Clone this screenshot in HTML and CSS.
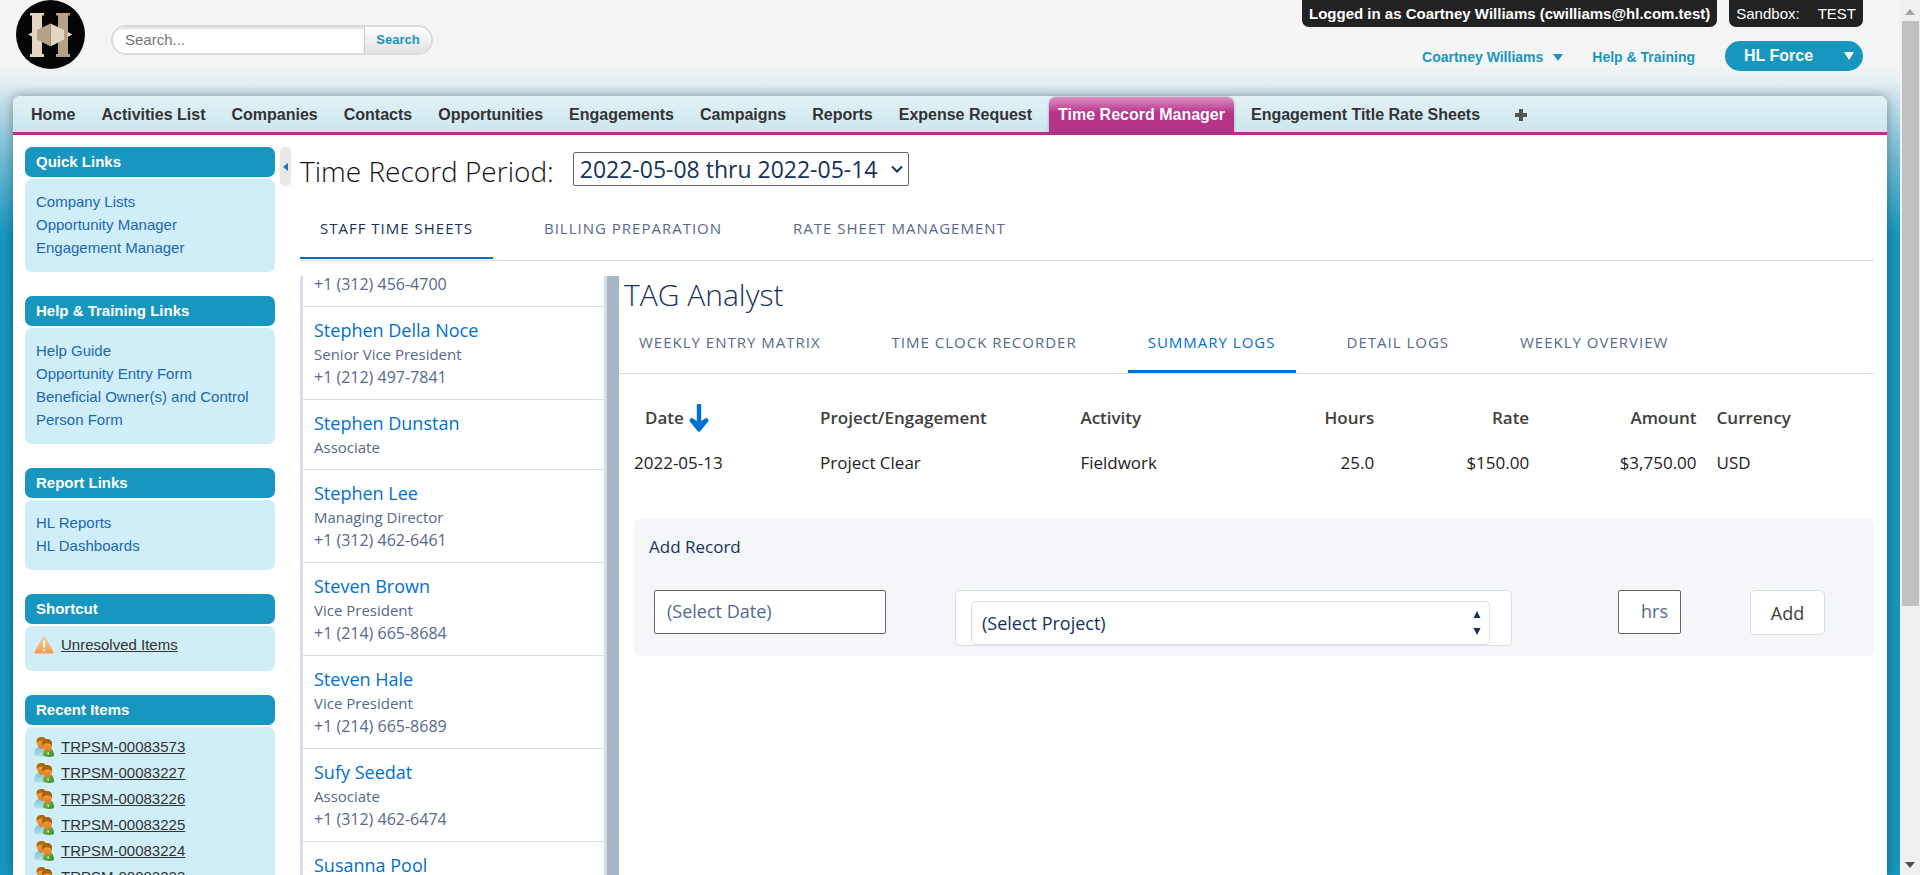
FILE: index.html
```html
<!DOCTYPE html>
<html lang="en">
<head>
<meta charset="utf-8">
<title>Time Record Manager</title>
<link rel="stylesheet" href="styles.css">
</head>
<body>
<svg class="defs" width="0" height="0" aria-hidden="true">
  <defs>
    <linearGradient id="warn" x1="0" y1="0" x2="0" y2="1"><stop offset="0" stop-color="#f8c9a0"/><stop offset="1" stop-color="#f39a4c"/></linearGradient>
    <linearGradient id="face" x1="0" y1="0" x2="0" y2="1"><stop offset="0" stop-color="#f6a53c"/><stop offset="1" stop-color="#e07c28"/></linearGradient>
    <linearGradient id="green" x1="0" y1="0" x2="1" y2="1"><stop offset="0" stop-color="#7dbd45"/><stop offset="1" stop-color="#3c8a2e"/></linearGradient>
    <linearGradient id="teal" x1="0" y1="0" x2="0" y2="1"><stop offset="0" stop-color="#7cc9d6"/><stop offset="1" stop-color="#b4e0e8"/></linearGradient>
    <symbol id="people" viewBox="0 0 20 20">
      <path d="M0 18c0-5 2-8 5-8 4 0 6 3 6 8-3 2-8 2-11 0z" fill="url(#teal)"/>
      <path d="M3 5c0-3 2-4 4.500-4S12 2 12 5s-2 7-4.500 7S3 8 3 5z" fill="url(#face)"/>
      <path d="M2.600 6C2 2 4 0 7.300 0c3 0 5 1.500 4.700 4C9 3 5 3 2.600 6z" fill="#b0680c"/>
      <path d="M9 18.500c0-5 2-7.500 5.500-7.500 3.800 0 5.500 3 5.500 8-3 1.300-8 1.300-11-.5z" fill="url(#green)"/>
      <path d="M8.500 8c0-3 2-5 4.800-5S18 5 18 8s-2 6.500-4.700 6.500S8.500 11 8.500 8z" fill="url(#face)"/>
      <path d="M8.200 9C7 4.500 9.500 2 13 2c3.800 0 5.800 2.500 5 7-1.500-3.500-7-4-9.800 0z" fill="#a8620e"/>
      <path d="M13 15.500h2.400l-1.200 3z" fill="#d8efc4"/>
    </symbol>
  </defs>
</svg>
<div class="page">
  <header class="top">
    <a class="logo" href="#" aria-label="Home page">
      <svg width="69" height="69" viewBox="0 0 69 69" aria-hidden="true">
        <circle cx="34.500" cy="34.500" r="34.500" fill="#050505"/>
        <path d="M14 13h14v2.500h-2V54h2v3H14v-3h2V15.500h-2z" fill="#e3d5be"/>
        <path d="M40 13h14v2.500h-2V54h2v3H40v-3h2V15.500h-2z" fill="#b3a284"/>
        <path d="M12 34.500l5-2.500v5zM56.500 34.500l-5-2.500v5z" fill="#e3d5be"/>
        <path d="M34.500 23.500L21 30v9.500l13.500 7z" fill="#b3a284"/>
        <path d="M34.500 23.500L48 30v9.500l-13.500 7z" fill="#e3d5be"/>
      </svg>
    </a>
    <form class="search">
      <input class="search-input" type="text" placeholder="Search..." aria-label="Search">
      <button class="search-button" type="button">Search</button>
    </form>
    <div class="top-right">
      <div class="banners">
        <div class="banner banner-user">Logged in as Coartney Williams (cwilliams@hl.com.test)</div>
        <div class="banner banner-env"><span>Sandbox:</span><span>TEST</span></div>
      </div>
      <div class="user-links">
        <a class="user-link" href="#">Coartney Williams<svg class="caret" width="10" height="7" viewBox="0 0 10 7" aria-hidden="true"><path d="M0 0h10L5 7z" fill="currentColor"/></svg></a>
        <a class="user-link" href="#">Help &amp; Training</a>
        <button class="app-menu" type="button">HL Force<svg width="10" height="8" viewBox="0 0 10 8" aria-hidden="true"><path d="M0 0h10L5 8z" fill="#fff"/></svg></button>
      </div>
    </div>
  </header>
  <div class="shell">
    <nav class="main-nav">
      <a href="#">Home</a>
      <a href="#">Activities List</a>
      <a href="#">Companies</a>
      <a href="#">Contacts</a>
      <a href="#">Opportunities</a>
      <a href="#">Engagements</a>
      <a href="#">Campaigns</a>
      <a href="#">Reports</a>
      <a href="#">Expense Request</a>
      <a href="#" class="current">Time Record Manager</a>
      <a href="#">Engagement Title Rate Sheets</a>
      <a href="#" class="plus" aria-label="All tabs"><svg width="12" height="12" viewBox="0 0 12 12" aria-hidden="true"><path d="M4 0h4v4h4v4H8v4H4V8H0V4h4z" fill="#555"/></svg></a>
    </nav>
    <div class="body">
      <aside class="sidebar">
        <section>
          <h2>Quick Links</h2>
          <ul class="links">
            <li><a href="#">Company Lists</a></li>
            <li><a href="#">Opportunity Manager</a></li>
            <li><a href="#">Engagement Manager</a></li>
          </ul>
        </section>
        <section>
          <h2>Help &amp; Training Links</h2>
          <ul class="links">
            <li><a href="#">Help Guide</a></li>
            <li><a href="#">Opportunity Entry Form</a></li>
            <li><a href="#">Beneficial Owner(s) and Control Person Form</a></li>
          </ul>
        </section>
        <section>
          <h2>Report Links</h2>
          <ul class="links">
            <li><a href="#">HL Reports</a></li>
            <li><a href="#">HL Dashboards</a></li>
          </ul>
        </section>
        <section>
          <h2>Shortcut</h2>
          <ul class="records shortcut">
            <li><svg width="20" height="18" viewBox="0 0 20 18" aria-hidden="true"><path d="M10 0.500c.8 0 1.200.5 1.600 1.200l7.900 14c.5 1 .1 1.800-1 1.800H1.500c-1.100 0-1.500-.8-1-1.800l7.900-14C8.800 1 9.200.5 10 .5z" fill="url(#warn)"/><path d="M9 4.500h2.200v7H9zM9 13h2.200v2.200H9z" fill="#fff"/></svg><a href="#">Unresolved Items</a></li>
          </ul>
        </section>
        <section>
          <h2>Recent Items</h2>
          <ul class="records">
            <li><svg width="20" height="20" aria-hidden="true"><use href="#people"/></svg><a href="#">TRPSM-00083573</a></li>
            <li><svg width="20" height="20" aria-hidden="true"><use href="#people"/></svg><a href="#">TRPSM-00083227</a></li>
            <li><svg width="20" height="20" aria-hidden="true"><use href="#people"/></svg><a href="#">TRPSM-00083226</a></li>
            <li><svg width="20" height="20" aria-hidden="true"><use href="#people"/></svg><a href="#">TRPSM-00083225</a></li>
            <li><svg width="20" height="20" aria-hidden="true"><use href="#people"/></svg><a href="#">TRPSM-00083224</a></li>
            <li><svg width="20" height="20" aria-hidden="true"><use href="#people"/></svg><a href="#">TRPSM-00083223</a></li>
          </ul>
        </section>
      </aside>
      <button class="collapse" type="button" aria-label="Collapse sidebar"><svg width="5" height="8" viewBox="0 0 5 8" aria-hidden="true"><path d="M5 0v8L0 4z" fill="#2a6fc0"/></svg></button>
      <main class="main">
        <div class="period">
          <label for="period">Time Record Period:</label>
          <div class="period-box">
            <select id="period"><option>2022-05-08 thru 2022-05-14</option></select>
            <svg class="chevron" width="12" height="8" viewBox="0 0 12 8" aria-hidden="true"><path d="M1 1.500l5 5 5-5" fill="none" stroke="#16325c" stroke-width="2"/></svg>
          </div>
        </div>
        <nav class="tabs">
          <a href="#" class="active">STAFF TIME SHEETS</a>
          <a href="#">BILLING PREPARATION</a>
          <a href="#">RATE SHEET MANAGEMENT</a>
        </nav>
        <div class="split">
          <ul class="staff">
            <li class="scrolled"><p class="phone">+1 (312) 456-4700</p></li>
            <li><a href="#">Stephen Della Noce</a><p>Senior Vice President</p><p class="phone">+1 (212) 497-7841</p></li>
            <li><a href="#">Stephen Dunstan</a><p>Associate</p></li>
            <li><a href="#">Stephen Lee</a><p>Managing Director</p><p class="phone">+1 (312) 462-6461</p></li>
            <li><a href="#">Steven Brown</a><p>Vice President</p><p class="phone">+1 (214) 665-8684</p></li>
            <li><a href="#">Steven Hale</a><p>Vice President</p><p class="phone">+1 (214) 665-8689</p></li>
            <li><a href="#">Sufy Seedat</a><p>Associate</p><p class="phone">+1 (312) 462-6474</p></li>
            <li><a href="#">Susanna Pool</a></li>
          </ul>
          <div class="divider"></div>
          <section class="detail">
            <h1>TAG Analyst</h1>
            <nav class="tabs subtabs">
              <a href="#">WEEKLY ENTRY MATRIX</a>
              <a href="#">TIME CLOCK RECORDER</a>
              <a href="#" class="active">SUMMARY LOGS</a>
              <a href="#">DETAIL LOGS</a>
              <a href="#">WEEKLY OVERVIEW</a>
            </nav>
            <div class="detail-body">
              <table class="logs">
                <thead>
                  <tr>
                    <th class="c-date"><span class="sort">Date<svg width="20" height="28" viewBox="0 0 20 28" aria-hidden="true"><path d="M7.800 1q0-1 1-1h2.400q1 0 1 1v16l4.300-2.800q1.200-.7 2 .4l.8 1.200q.6 1-.3 1.900l-7.800 9.500q-1.200 1.200-2.400 0L1 17.700q-.9-.9-.3-1.900l.8-1.200q.8-1.100 2-.4L7.800 17z" fill="#0070d2"/></svg></span></th>
                    <th class="c-project">Project/Engagement</th>
                    <th class="c-activity">Activity</th>
                    <th class="c-hours num">Hours</th>
                    <th class="c-rate num">Rate</th>
                    <th class="c-amount num">Amount</th>
                    <th class="c-currency">Currency</th>
                  </tr>
                </thead>
                <tbody>
                  <tr><td>2022-05-13</td><td>Project Clear</td><td>Fieldwork</td><td class="num">25.0</td><td class="num">$150.00</td><td class="num">$3,750.00</td><td class="c-currency">USD</td></tr>
                </tbody>
              </table>
              <form class="add">
                <h3>Add Record</h3>
                <div class="add-row">
                  <input class="field date" type="text" placeholder="(Select Date)" aria-label="Date">
                  <div class="project-frame">
                    <div class="project-box">
                      <select aria-label="Project"><option>(Select Project)</option></select>
                      <svg class="updown" width="8" height="24" viewBox="0 0 8 24" aria-hidden="true"><path d="M4 0l3.500 7h-7zM4 24l3.500-7h-7z" fill="#16325c"/></svg>
                    </div>
                  </div>
                  <input class="field hours" type="text" placeholder="hrs" aria-label="Hours">
                  <button class="add-button" type="button">Add</button>
                </div>
              </form>
            </div>
          </section>
        </div>
      </main>
    </div>
  </div>
</div>
<div class="scrollbar" aria-hidden="true">
  <svg width="10" height="6" viewBox="0 0 10 6"><path d="M5 0l5 6H0z" fill="#a3a3a3"/></svg>
  <div class="track"><div class="thumb"></div></div>
  <svg width="10" height="6" viewBox="0 0 10 6"><path d="M5 6l5-6H0z" fill="#505050"/></svg>
</div>
</body>
</html>
```
FILE: styles.css
```css
* { box-sizing: border-box; }

body {
  margin: 0;
  height: 100vh;
  overflow: hidden;
  display: flex;
  font-family: "Liberation Sans", Arial, sans-serif;
  font-size: 15px;
  color: #222;
}

a { text-decoration: none; color: inherit; }
ul { list-style: none; margin: 0; padding: 0; }
h1, h2, h3, p { margin: 0; font-weight: normal; }
button, input, select { font: inherit; margin: 0; }
svg { display: block; flex: none; }
.defs { position: absolute; }

.page {
  flex: 1;
  min-width: 0;
  display: flex;
  flex-direction: column;
  background: linear-gradient(#f5f5f5 65px, #e0edf1 84px, #cde3ec 96px, #6fbad4 160px, #1797c0 235px);
}

/* Header */
.top { display: flex; height: 96px; padding-left: 16px; flex: none; }
.logo { width: 69px; height: 69px; }

.search {
  display: flex;
  width: 322px;
  height: 30px;
  margin: 25px 0 0 26px;
  border: 2px solid #dcdcdc;
  border-radius: 15px;
  overflow: hidden;
  background: #fff;
}
.search-input {
  flex: 1;
  min-width: 0;
  border: 0;
  padding: 0 12px 2px;
  outline: 0;
  background: #fff;
  box-shadow: inset 0 2px 2px #ddd;
}
.search-input::placeholder { color: #757575; }
.search-button {
  width: 67px;
  border: 0;
  border-left: 1px solid #ccc;
  padding: 0 0 2px;
  background: linear-gradient(#fff, #e2e2e2);
  color: #1797c0;
  font-size: 13px;
  font-weight: bold;
}

.top-right { margin-left: auto; margin-right: 37px; }
.banners { display: flex; gap: 12px; justify-content: flex-end; }
.banner {
  height: 27px;
  line-height: 28px;
  padding: 0 7px;
  border-radius: 0 0 7px 7px;
  background: #222;
  color: #fff;
}
.banner-user { font-weight: bold; }
.banner-env { display: flex; gap: 18px; }
.user-links { display: flex; align-items: center; justify-content: flex-end; margin-top: 14px; }
.user-link { display: flex; align-items: center; padding-top: 2px; margin-right: 30px; color: #1797c0; font-size: 14px; font-weight: bold; }
.user-link:first-child { margin-right: 29px; }
.caret { margin-left: 10px; }
.app-menu {
  display: flex;
  align-items: center;
  justify-content: space-between;
  width: 138px;
  height: 30px;
  padding: 0 9px 0 19px;
  border: 0;
  border-radius: 15px;
  background: #1797c0;
  color: #fff;
  font-size: 16px;
  font-weight: bold;
}

/* Content shell */
.shell {
  flex: 1;
  min-height: 0;
  display: flex;
  flex-direction: column;
  margin: 0 13px;
  background: #fff;
  border-radius: 7px 7px 0 0;
  box-shadow: 0 0 12px rgba(0, 0, 0, 0.35);
}
.main-nav {
  display: flex;
  gap: 8px;
  flex: none;
  height: 39px;
  padding: 1px 9px 0;
  border-bottom: 3px solid #b7338a;
  border-radius: 7px 7px 0 0;
  background: linear-gradient(#e3f1f6, #cce7ee);
  font-size: 16px;
  font-weight: bold;
  line-height: 35px;
  color: #333;
}
.main-nav a { padding: 0 9px; }
.main-nav .current {
  border-radius: 7px 7px 0 0;
  background: linear-gradient(#dc8fc2, #b7338a 16px);
  box-shadow: 0 0 3px rgba(0, 0, 0, 0.3);
  color: #fff;
}
.main-nav .plus { display: flex; align-items: center; padding-left: 18px; }

.body { flex: 1; min-height: 0; display: flex; padding: 0 13px 0 12px; }

/* Sidebar */
.sidebar { width: 250px; flex: none; padding-top: 12px; display: flex; flex-direction: column; gap: 24px; overflow: hidden; }
.sidebar section { flex: none; }
.sidebar h2 {
  height: 30px;
  margin-bottom: 2px;
  padding-left: 11px;
  border-radius: 7px;
  background: #1797c0;
  color: #fff;
  font-size: 15px;
  font-weight: bold;
  line-height: 30px;
}
.links, .records { border-radius: 7px; background: #cfeef8; }
.links { padding: 11px 11px 13px; line-height: 23px; color: #1b67b3; }
.records { padding: 7px 9px; line-height: 26px; color: #333; }
.records li { display: flex; align-items: center; gap: 7px; }
.records a { text-decoration: underline; }
.shortcut { padding: 6px 9px 13px; }

.collapse {
  flex: none;
  display: flex;
  align-items: center;
  justify-content: center;
  width: 11px;
  height: 39px;
  margin: 12px 9px 0 5px;
  padding: 0;
  border: 0;
  border-radius: 5px;
  background: #e8e8e8;
}

/* Main column */
.main {
  flex: 1;
  min-width: 0;
  display: flex;
  flex-direction: column;
  padding-top: 17px;
  font-family: "Open Sans", "Noto Sans", sans-serif;
  font-size: 15px;
  color: #16325c;
}
.period { display: flex; align-items: center; gap: 19px; flex: none; height: 34px; }
.period label { padding-top: 3px; font-size: 28px; font-weight: 300; color: #111; }
.period-box, .project-box { position: relative; }
.period select {
  appearance: none;
  width: 336px;
  height: 34px;
  padding: 0 6px;
  border: 1px solid #666;
  border-radius: 2px;
  background: #fff;
  color: #16325c;
  font-size: 23px;
}
.chevron { position: absolute; right: 6px; top: 13px; }

.tabs {
  display: flex;
  gap: 31px;
  flex: none;
  margin-top: 30px;
  padding-bottom: 1px;
  border-bottom: 1px solid #d8dde6;
  line-height: 24px;
  letter-spacing: 1px;
  color: #54698d;
}
.tabs a { padding: 0 20px 17px; border-bottom: 2px solid transparent; }
.tabs .active { border-color: #0070d2; color: #16325c; }

.split { flex: 1; min-height: 0; display: flex; margin-top: 15px; }
.staff {
  width: 307px;
  flex: none;
  overflow: hidden;
  border: solid #d8dde6;
  border-width: 0 3px;
}
.staff li { padding: 11px 10px 10px 11px; border-bottom: 1px solid #d8dde6; }
.staff a { display: block; font-size: 18px; line-height: 25px; color: #0070d2; }
.staff p { line-height: 23px; color: #54698d; }
.staff .phone { font-size: 16px; }
.staff .scrolled { padding-top: 0; margin-top: -3px; }
.divider { width: 12px; flex: none; background: #a8b7c7; }

.detail { flex: 1; min-width: 0; }
.detail h1 { padding-left: 5px; font-size: 30px; font-weight: 300; line-height: 38px; }
.subtabs { margin-top: 16px; padding-bottom: 0; }
.subtabs a { padding-bottom: 16px; border-bottom-width: 3px; }
.subtabs .active { color: #0070d2; }
.detail-body { padding: 21px 0 0 15px; }

.logs {
  width: 100%;
  table-layout: fixed;
  border-collapse: collapse;
  font-size: 17px;
  line-height: 24px;
  color: #222;
}
.logs th, .logs td { height: 45px; padding: 0; text-align: left; }
.logs th { color: #3e3e3c; font-weight: 600; }
.logs .num { text-align: right; padding-right: 10px; }
.logs .c-currency { padding-left: 10px; }
.c-date { width: 15%; }
.c-project { width: 21%; }
.c-activity { width: 13%; }
.c-hours { width: 11.5%; }
.c-rate { width: 12.5%; }
.c-amount { width: 13.5%; }
.sort { display: flex; align-items: center; gap: 5px; padding-left: 11px; }

.add { margin-top: 34px; padding: 15px 0 10px; border-radius: 6px; background: #f4f6fa; }
.add h3 { padding-left: 15px; font-size: 17px; line-height: 26px; }
.add-row {
  display: grid;
  grid-template-columns: 301fr 663fr 132fr 124fr;
  align-items: start;
  margin-top: 30px;
  padding-left: 20px;
  font-size: 18px;
}
.field { height: 44px; border: 1px solid #666; border-radius: 2px; padding: 0 12px 2px; background: #fff; color: #16325c; }
.field::placeholder { color: #54698d; opacity: 1; }
.date { width: 232px; }
.hours { width: 63px; text-align: right; }
.project-frame { width: 84%; padding: 10px 21px 0 15px; border: 1px solid #d8dde6; border-radius: 5px; background: #fff; }
.project-box select {
  appearance: none;
  display: block;
  width: 100%;
  height: 44px;
  padding: 0 10px;
  border: 1px solid #d8dde6;
  border-radius: 5px;
  background: #fff;
  color: #16325c;
}
.updown { position: absolute; right: 9px; top: 10px; }
.add-button { width: 75px; height: 45px; border: 1px solid #d8dde6; border-radius: 5px; background: #fff; color: #3e3e3c; }

/* Scrollbar */
.scrollbar {
  width: 20px;
  flex: none;
  display: flex;
  flex-direction: column;
  align-items: center;
  padding: 9px 0 7px;
  background: #f0f0f0;
}
.track { flex: 1; width: 17px; padding: 6px 0; }
.thumb { height: 70%; background: #c1c1c1; }
```
